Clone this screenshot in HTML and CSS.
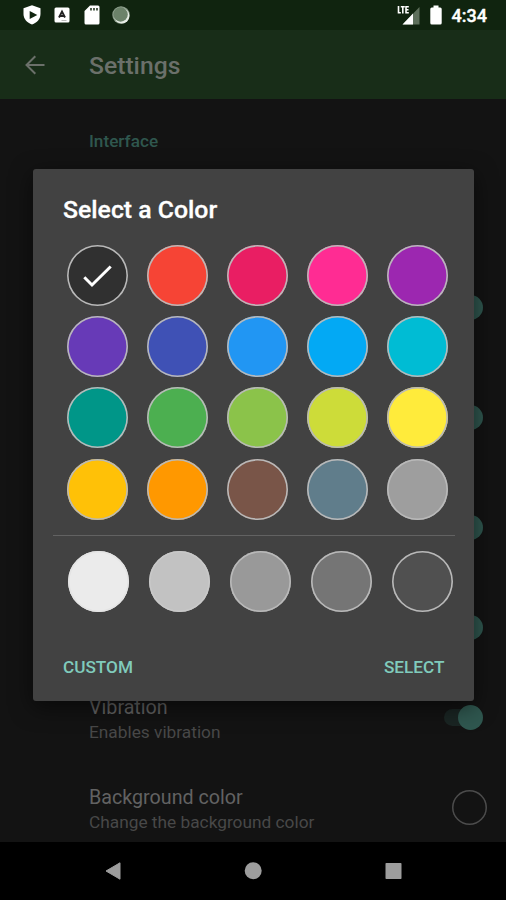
FILE: index.html
```html
<!DOCTYPE html>
<html lang="en">
<head>
<meta charset="utf-8">
<title>Settings</title>
<link rel="stylesheet" href="styles.css">
</head>
<body>
<div class="screen">
  <header class="status">
    <div class="status-left">
      <svg width="20" height="20" viewBox="0 0 20 20"><path d="M10 .3 18.500 3.200V9c0 5-3.500 8.700-8.500 10.500C5 17.700 1.500 14 1.500 9V3.200z" fill="#fff"/><path d="M7.700 6v8l7.600-4z" fill="#10240f"/></svg>
      <svg width="16" height="16" viewBox="0 0 16 16"><rect x=".5" y=".5" width="15" height="15" rx="1.500" fill="#fff"/><path d="M5 10.500 8 4.500 11 10.500M6.300 9h3.400" fill="none" stroke="#222" stroke-width="1.900"/><path d="M7.500 13.500h5" stroke="#bbb" stroke-width="1"/></svg>
      <svg class="sd" width="16" height="20" viewBox="0 0 16 20"><path d="M6 .5h8a1.500 1.500 0 0 1 1.500 1.500v16a1.500 1.500 0 0 1-1.500 1.500H2A1.500 1.500 0 0 1 .5 18V6z" fill="#fff"/><path d="M7 3v2.500M10 3v2.500M13 3v2.500" stroke="#33452f" stroke-width="1.700"/></svg>
      <svg width="18" height="18" viewBox="0 0 18 18"><circle cx="9" cy="9" r="8.700" fill="#8fa08e"/><circle cx="9.800" cy="9.800" r="7.600" fill="#e6ece5"/><circle cx="8.600" cy="8.500" r="7.200" fill="#6c826a"/></svg>
    </div>
    <div class="status-right">
      <svg width="23" height="20" viewBox="0 0 23 20"><path d="M22.500 2v17.500H5.500z" fill="#5e705c"/><path d="M16 8.500v11H5.500z" fill="#fff"/><path d="M1.500 1v6.700h2.300M3.800 1.700h4M5.800 1.700v6.700M11.800 1.700H9v6h2.800M9 4.700h2.500" fill="none" stroke="#fff" stroke-width="1.600"/></svg>
      <svg width="12" height="20" viewBox="0 0 12 20"><path d="M3.500.5h5v2h1.700a1.500 1.500 0 0 1 1.500 1.500v14a1.500 1.500 0 0 1-1.500 1.500H1.800A1.500 1.500 0 0 1 .3 18V4a1.500 1.500 0 0 1 1.500-1.500h1.700z" fill="#fff"/></svg>
      <span class="clock">4:34</span>
    </div>
  </header>
  <div class="appbar">
    <svg width="20" height="20" viewBox="0 0 20 20"><path d="M19.500 10H2M10.300 1.200 1.500 10l8.800 8.800" fill="none" stroke="#6b706a" stroke-width="2"/></svg>
    <h1>Settings</h1>
  </div>
  <main class="settings">
    <h2>Interface</h2>
    <div class="row"></div>
    <div class="row tall"><span class="switch"></span></div>
    <div class="row tall"><span class="switch"></span></div>
    <div class="row tall"><span class="switch"></span></div>
    <div class="row end"><span class="switch"></span></div>
    <div class="row">
      <div class="label"><p class="name">Vibration</p><p class="hint">Enables vibration</p></div>
      <span class="switch"></span>
    </div>
    <div class="row">
      <div class="label"><p class="name">Background color</p><p class="hint">Change the background color</p></div>
      <span class="preview"></span>
    </div>
  </main>
  <nav class="nav">
    <svg width="18" height="20" viewBox="0 0 18 20"><path d="M16 1.800v16.400L2 10z" fill="#9d9d9d" stroke="#9d9d9d" stroke-linejoin="round"/></svg>
    <svg width="18" height="20" viewBox="0 0 18 20"><circle cx="9.200" cy="9.800" r="8.500" fill="#9d9d9d"/></svg>
    <svg width="18" height="20" viewBox="0 0 18 20"><rect x="1.500" y="2" width="16" height="16" rx=".7" fill="#9d9d9d"/></svg>
  </nav>
  <section class="dialog">
    <h3>Select a Color</h3>
    <div class="colors">
      <i class="dot c1"><svg width="30" height="24" viewBox="0 0 30 24"><path d="M2.300 13.300 10 21 28.700 2.500" fill="none" stroke="#fff" stroke-width="3"/></svg></i>
      <i class="dot c2"></i><i class="dot c3"></i><i class="dot c4"></i><i class="dot c5"></i>
      <i class="dot c6"></i><i class="dot c7"></i><i class="dot c8"></i><i class="dot c9"></i><i class="dot c10"></i>
      <i class="dot c11"></i><i class="dot c12"></i><i class="dot c13"></i><i class="dot c14"></i><i class="dot c15"></i>
      <i class="dot c16"></i><i class="dot c17"></i><i class="dot c18"></i><i class="dot c19"></i><i class="dot c20"></i>
    </div>
    <div class="shades">
      <i class="dot s1"></i><i class="dot s2"></i><i class="dot s3"></i><i class="dot s4"></i><i class="dot s5"></i>
    </div>
    <div class="actions"><span>CUSTOM</span><span>SELECT</span></div>
  </section>
</div>
</body>
</html>
```
FILE: styles.css
```css
* { box-sizing: border-box; }
body { margin: 0; background: #000; font-family: Roboto, sans-serif; }
h1, h2, h3, p { margin: 0; }
svg { display: block; flex: none; }
.screen { position: relative; width: 506px; height: 900px; display: flex; flex-direction: column; overflow: hidden; }
.status { height: 30px; flex: none; background: #10240f; display: flex; justify-content: space-between; padding: 0 19px 0 22px; }
.status-left, .status-right { display: flex; align-items: center; }
.status-left { gap: 12px; }
.sd { margin-left: 2px; }
.status-right { gap: 10px; }
.clock { color: #fff; font-size: 18px; font-weight: 500; line-height: 30px; margin-top: 2px; -webkit-text-stroke: .4px #fff; }
.appbar { height: 69px; flex: none; background: #182d18; display: flex; align-items: center; padding: 0 25px; gap: 44px; }
.appbar h1 { color: #6b706a; font-size: 24.7px; font-weight: 500; line-height: 30px; margin-top: 2px; }
.settings { height: 743px; flex: none; background: #131313; overflow: hidden; }
.settings h2 { height: 63px; padding: 31px 0 0 89px; color: #2f574e; font-size: 17.2px; line-height: 22px; font-weight: 500; }
.row { height: 90px; padding: 0 18px 0 89px; display: flex; align-items: center; justify-content: space-between; }
.row.tall { height: 110px; }
.row.tall, .row.end { justify-content: flex-end; }
.label { padding-top: 5px; }
.name { color: #626262; font-size: 19.7px; line-height: 25px; }
.hint { color: #484848; font-size: 17.3px; line-height: 25px; }
.switch { position: relative; width: 39px; height: 25px; display: flex; justify-content: flex-end; margin-right: 5px; }
.switch::before { content: ""; position: absolute; left: 0; top: 4px; width: 35px; height: 17px; border-radius: 9px; background: #1a2523; }
.switch::after { content: ""; position: relative; width: 25px; height: 25px; border-radius: 50%; background: #2f574f; }
.preview { width: 35px; height: 35px; box-shadow: inset 0 0 0 1.500px #4c4c4c; border-radius: 50%; margin-right: 1px; }
.nav { height: 58px; flex: none; background: #000; display: flex; align-items: center; justify-content: space-between; padding: 0 104px; }
.dialog { position: absolute; left: 33px; top: 169px; width: 441px; height: 532px; background: #424242; border-radius: 3px; box-shadow: 0 6px 22px rgba(0, 0, 0, .55); }
.dialog h3 { padding: 25px 0 0 30px; height: 76px; color: #fff; font-size: 24.8px; line-height: 32px; font-weight: 500; -webkit-text-stroke: .3px #fff; }
.colors { display: grid; grid-template-columns: repeat(5, 61px); column-gap: 19.100px; row-gap: 10.200px; padding-left: 33.500px; }
.dot { width: 61px; height: 61px; box-shadow: inset 0 0 0 1.600px #b9b9b9; border-radius: 50%; display: flex; align-items: center; justify-content: center; }
.shades { margin: 15.500px 19px 0 20px; padding: 15px 0 0 15px; border-top: 1px solid #626262; display: flex; gap: 20.100px; }
.shades .dot { flex: none; }
.actions { display: flex; justify-content: space-between; padding: 44px 29.500px 0 30px; color: #80cbbc; font-size: 17.2px; line-height: 22px; font-weight: 500; }
.c1 { background: #303030; } .c2 { background: #f64435; } .c3 { background: #e91e63; } .c4 { background: #ff2c93; } .c5 { background: #9c27b0; }
.c6 { background: #673ab7; } .c7 { background: #3f51b5; } .c8 { background: #2196f3; } .c9 { background: #03a9f4; } .c10 { background: #00bcd4; }
.c11 { background: #009688; } .c12 { background: #4caf50; } .c13 { background: #8bc34a; } .c14 { background: #cddc39; } .c15 { background: #ffeb3b; }
.c16 { background: #ffc107; } .c17 { background: #ff9800; } .c18 { background: #795548; } .c19 { background: #607d8b; } .c20 { background: #9e9e9e; }
.s1 { background: #ebebeb; box-shadow: inset 0 0 0 1.600px #e4e4e4; } .s2 { background: #c2c2c2; box-shadow: inset 0 0 0 1.600px #c8c8c8; } .s3 { background: #999; } .s4 { background: #757575; } .s5 { background: #505050; }
```
